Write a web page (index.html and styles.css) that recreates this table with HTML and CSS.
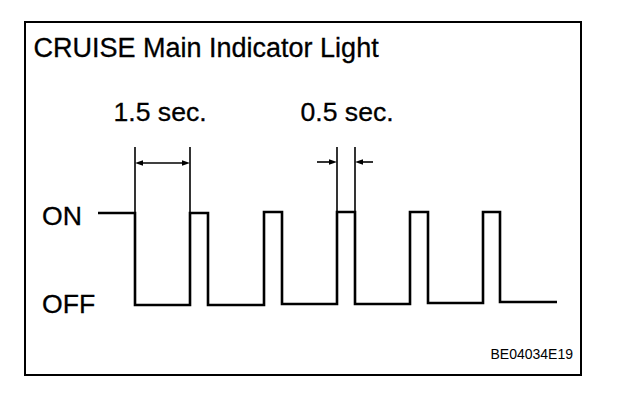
FILE: index.html
```html
<!DOCTYPE html>
<html>
<head>
<meta charset="utf-8">
<link rel="stylesheet" href="styles.css">
</head>
<body>
<div class="frame">
  <div class="title">CRUISE Main Indicator Light</div>
  <svg class="chart" viewBox="26 64 554 266" width="554" height="266" xmlns="http://www.w3.org/2000/svg">
    <text class="lbl" x="113.5" y="121">1.5 sec.</text>
    <text class="lbl" x="300.5" y="121">0.5 sec.</text>
    <text class="lbl" x="42" y="225">ON</text>
    <text class="lbl" x="42" y="313">OFF</text>
    <g class="dim">
      <line x1="135" y1="147" x2="135" y2="213"/>
      <line x1="190" y1="147" x2="190" y2="213"/>
      <line x1="141" y1="163" x2="184" y2="163"/>
      <line x1="337" y1="147" x2="337" y2="212"/>
      <line x1="355" y1="147" x2="355" y2="212"/>
      <line x1="317" y1="162" x2="331" y2="162"/>
      <line x1="361" y1="162" x2="373" y2="162"/>
    </g>
    <g class="head">
      <polygon points="135,163 143,160.3 143,165.7"/>
      <polygon points="190,163 182,160.3 182,165.7"/>
      <polygon points="337,162 329,159.3 329,164.7"/>
      <polygon points="355,162 363,159.3 363,164.7"/>
    </g>
    <path class="wave" d="M98 213 H135 V305 H190 V213 H208 V305 H264 V212 H282 V304 H337 V212 H355 V304 H410 V212 H428 V303 H483 V212 H500 V302 H557"/>
  </svg>
  <div class="code">BE04034E19</div>
</div>
</body>
</html>
```

FILE: styles.css
```css
html, body {
  margin: 0;
  padding: 0;
  background: #fff;
}
body {
  width: 624px;
  height: 400px;
  font-family: "Liberation Sans", Arial, sans-serif;
  color: #000;
}
.frame {
  margin: 21px 0 0 24px;
  width: 554px;
  height: 351px;
  border: 2px solid #000;
  display: flex;
  flex-direction: column;
}
.title {
  padding: 10px 0 0 7.5px;
  font-size: 27px;
  line-height: 31px;
  height: 31px;
  -webkit-text-stroke: 0.3px #000;
}
.chart {
  display: block;
  flex: none;
}
.lbl {
  font-family: "Liberation Sans", Arial, sans-serif;
  font-size: 26.6px;
  fill: #000;
  stroke: #000;
  stroke-width: 0.3;
}
.dim line {
  stroke: #000;
  stroke-width: 1.6;
}
.head polygon {
  fill: #000;
}
.wave {
  fill: none;
  stroke: #000;
  stroke-width: 2.6;
  stroke-linejoin: miter;
  stroke-linecap: butt;
}
.code {
  margin-top: auto;
  padding: 0 7px 12px 0;
  text-align: right;
  font-size: 14px;
  line-height: 16px;
}
```
